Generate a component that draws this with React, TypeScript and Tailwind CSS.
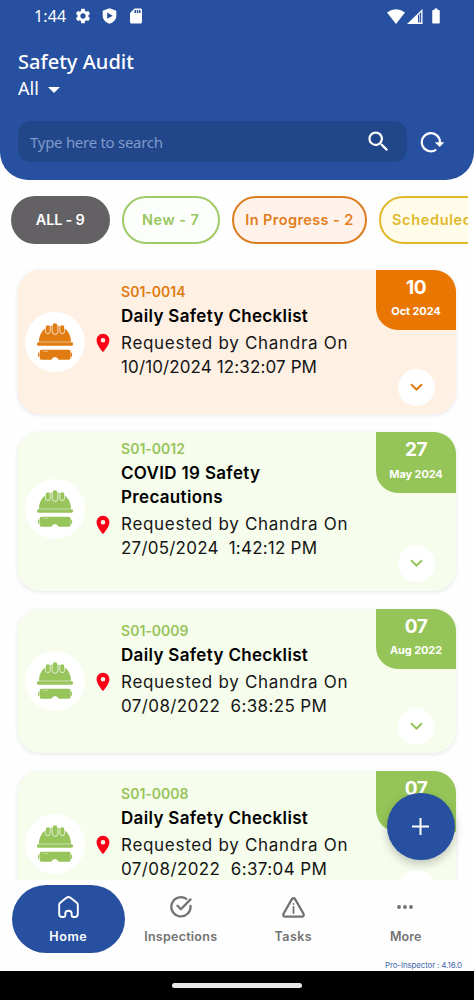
import type { ReactNode } from "react";
import { MdBatteryFull, MdLocationOn, MdSdCard, MdSearch, MdSettings } from "react-icons/md";

function ShieldPlay() {
  return (
    <svg className="h-4 w-[15px]" viewBox="0 0 15 16" fill="none">
      <path d="M7.5 0.3 14.3 2.7V7.8C14.3 11.6 11.2 14.6 7.5 15.8 3.8 14.6.7 11.6.7 7.8V2.7Z" fill="white" />
      <path d="M5.2 4.6v6.2L10.7 7.7Z" fill="#2751a0" />
    </svg>
  );
}

function Wifi() {
  return (
    <svg className="h-[15px] w-[18px]" viewBox="0 0 18 15">
      <path d="M0 3.6Q9-3.2 18 3.6L9 15Z" fill="white" />
    </svg>
  );
}

function Signal() {
  return (
    <svg className="h-[15px] w-[16px]" viewBox="0 0 16 15">
      <path d="M0 15 15.5 0V15Z" fill="white" />
      <path d="M11 6.2 14.2 3.1V13.6H11Z" fill="#2751a0" />
      <path d="M12.6 4.8V15" stroke="white" strokeWidth="0.7" />
    </svg>
  );
}

function Refresh() {
  return (
    <svg className="h-6 w-6" viewBox="0 0 24 24" fill="none">
      <path d="M16.2 19.6A9.1 9.1 0 1 1 20 12V14" stroke="white" strokeWidth="2.2" />
      <path d="M14.8 12.2H24.4L19.7 17Z" fill="white" />
    </svg>
  );
}

function Helmet() {
  return (
    <svg className="h-[37px] w-9" viewBox="0 0 108 111" fill="currentColor">
      <path d="M6 56C6 34 17 18 34 11Q54 2 74 11C91 18 102 34 102 56Z" />
      <path d="M47 32V8Q47 1 54 1t7 7V32Z" />
      <path d="M26 28V13Q27 7 33 7t6 6V28ZM69 28V13Q70 7 76 7t6 6V28Z" />
      <path
        d="M45.5 9V26Q46 34 54 34t8.5-8V9M25 13V25Q26 32 32.5 32t7-7V10M68.5 10V25Q69 32 75.5 32t7.5-7V13"
        fill="none"
        stroke="white"
        strokeWidth="2.2"
      />
      <rect x="0" y="58" width="108" height="10" rx="4" />
      <path d="M13 80H95Q101 80 101 86V104Q101 110 95 110H65Q61 102 54 102T43 110H13Q8 110 8 104V86Q8 80 13 80Z" />
      <path d="M5 89V101M103.5 89V101" stroke="currentColor" strokeWidth="3.5" />
      <path d="M18 85H34" stroke="white" strokeWidth="1.2" />
    </svg>
  );
}

function HomeIcon() {
  return (
    <svg className="h-[22px] w-[21px]" viewBox="0 0 21 22" fill="none" stroke="currentColor" strokeWidth="1.9" strokeLinejoin="round">
      <path d="M1.2 8.8Q1.2 7.6 2.2 6.8L8.8 1.6Q10.5.4 12.2 1.6L18.8 6.8Q19.8 7.6 19.8 8.8V17.9Q19.8 21 16.8 21H15.1Q13.7 21 13.7 19.6V17.7Q13.7 14.7 10.5 14.7T7.3 17.7V19.6Q7.3 21 5.9 21H4.2Q1.2 21 1.2 17.9Z" />
    </svg>
  );
}

function CheckIcon() {
  return (
    <svg className="h-[22px] w-[22px]" viewBox="0 0 22 22" fill="none" stroke="currentColor" strokeWidth="2.3" strokeLinecap="round" strokeLinejoin="round">
      <path d="M16.4 2.9A9.6 9.6 0 1 0 20.5 9.9" />
      <path d="M7.5 9.8 10.9 13.2 20.5 3.4" />
    </svg>
  );
}

function TasksIcon() {
  return (
    <svg className="h-[21px] w-[23px]" viewBox="0 0 23 21" fill="none" stroke="currentColor" strokeWidth="2.3" strokeLinecap="round" strokeLinejoin="round">
      <path d="M9.9 2.1Q11.5.4 13.1 2.1L21.5 16.8Q22.3 19.5 19.8 19.7H3.2Q.7 19.5 1.5 16.8Z" />
      <path d="M11.5 10V16" strokeWidth="1.8" />
      <path d="M11.5 7V7.1" strokeWidth="1.8" />
    </svg>
  );
}

function DotsIcon() {
  return (
    <svg className="mr-px mb-px h-1 w-4" viewBox="0 0 16 4" fill="currentColor">
      <circle cx="2" cy="2" r="1.9" />
      <circle cx="8" cy="2" r="1.9" />
      <circle cx="14" cy="2" r="1.9" />
    </svg>
  );
}

type Audit = {
  id: string;
  title: ReactNode;
  date: string;
  dateClass: string;
  day: string;
  month: string;
  text: string;
  card: string;
  badge: string;
};

const audits: Audit[] = [
  {
    id: "S01-0014",
    title: "Daily Safety Checklist",
    date: "10/10/2024 12:32:07 PM",
    dateClass: "tracking-[0.12px]",
    day: "10",
    month: "Oct 2024",
    text: "text-[#e07c12]",
    card: "h-[144.5px] bg-[#fef0e3] pt-2.5",
    badge: "bg-[#e97600]",
  },
  {
    id: "S01-0012",
    title: (
      <>
        COVID 19 Safety
        <br />
        Precautions
      </>
    ),
    date: "27/05/2024  1:42:12 PM",
    dateClass: "tracking-[0.22px]",
    day: "27",
    month: "May 2024",
    text: "text-[#98c45c]",
    card: "h-[158.5px] bg-[#f6fdec] pt-[5px]",
    badge: "bg-[#95c558]",
  },
  {
    id: "S01-0009",
    title: "Daily Safety Checklist",
    date: "07/08/2022  6:38:25 PM",
    dateClass: "tracking-[0.38px]",
    day: "07",
    month: "Aug 2022",
    text: "text-[#98c45c]",
    card: "h-[144.5px] bg-[#f6fdec] pt-2.5",
    badge: "bg-[#95c558]",
  },
  {
    id: "S01-0008",
    title: "Daily Safety Checklist",
    date: "07/08/2022  6:37:04 PM",
    dateClass: "tracking-[0.4px]",
    day: "07",
    month: "Aug 2022",
    text: "text-[#98c45c]",
    card: "h-[144.5px] bg-[#f6fdec] pt-[10.5px]",
    badge: "bg-[#95c558]",
  },
];

function AuditCard({ audit }: { audit: Audit }) {
  return (
    <article className={`relative flex w-[438px] shrink-0 rounded-[22px] shadow-[0_1px_4px_rgba(0,0,0,0.1)] ${audit.card}`}>
      <div className={`-mt-2.5 flex w-[73px] shrink-0 items-center pl-[6.5px] ${audit.text}`}>
        <div className="flex h-[60px] w-[60px] items-center justify-center rounded-full bg-white">
          <Helmet />
        </div>
      </div>
      <div className="ml-[30px] w-[250px] text-[17px] leading-6 text-[#151515]">
        <p className={`text-[14px] font-semibold tracking-[0.02px] ${audit.text}`}>{audit.id}</p>
        <h2 className="font-semibold tracking-[0.33px] text-black">{audit.title}</h2>
        <div className="-ml-[29px] mt-[3px] flex">
          <MdLocationOn className="mt-[1.5px] mr-[7px] h-[22px] w-[22px] shrink-0 text-[#fb0017]" />
          <div className="whitespace-pre">
            <p className="tracking-[0.7px]">Requested by Chandra On</p>
            <p className={audit.dateClass}>{audit.date}</p>
          </div>
        </div>
      </div>
      <div className={`absolute top-0 right-0 flex h-[60.5px] w-[80px] flex-col items-center rounded-tr-[22px] rounded-bl-[22px] font-bold text-white ${audit.badge}`}>
        <span className="mt-1.5 text-[19px] leading-6 tracking-[-0.5px]">{audit.day}</span>
        <span className="-mt-[0.5px] text-[11px] leading-6 tracking-[-0.1px]">{audit.month}</span>
      </div>
      <div className={`absolute right-[21px] bottom-[8.5px] flex h-[37px] w-[37px] items-center justify-center rounded-full bg-white ${audit.text}`}>
        <svg className="mb-px h-[8px] w-[13px]" viewBox="0 0 13 8" fill="none" stroke="currentColor" strokeWidth="2">
          <path d="M1 1.2 6.5 6.5 12 1.2" />
        </svg>
      </div>
    </article>
  );
}

function NavItem({ icon, label, labelClass, active }: { icon: ReactNode; label: string; labelClass: string; active?: boolean }) {
  return (
    <div className={`flex h-[68px] w-[112.5px] flex-col items-center rounded-[34px] ${active ? "bg-[#2751a0] text-white" : "text-[#737373]"}`}>
      <div className="mt-[10.5px] flex h-[23px] items-center">{icon}</div>
      <span className={`mt-[10px] text-[12.5px] leading-4 font-semibold ${labelClass}`}>{label}</span>
    </div>
  );
}

export default function App() {
  return (
    <div className="flex h-[1000px] w-[474px] flex-col overflow-hidden bg-[#fefefe] font-['Inter','Noto_Sans',sans-serif]">
      <header className="flex h-[180px] shrink-0 flex-col rounded-b-[28px] bg-[#2751a0] font-['Noto_Sans',sans-serif] text-white">
        <div className="flex h-8 items-center pr-[33px] pl-[34px]">
          <span className="w-[41px] text-[16px] leading-8 tracking-[0.1px]">1:44</span>
          <MdSettings className="h-[18px] w-[18px] -ml-[1.5px]" />
          <span className="ml-[10px]"><ShieldPlay /></span>
          <MdSdCard className="ml-[10px] h-[18px] w-[18px]" />
          <div className="ml-auto flex items-center">
            <Wifi />
            <span className="ml-[2px]"><Signal /></span>
            <MdBatteryFull className="ml-[3.5px] -mr-[3.5px] h-[18px] w-[18px]" />
          </div>
        </div>
        <h1 className="mt-[16px] pl-[18px] text-[20px] leading-7 font-medium tracking-[0.03px]">Safety Audit</h1>
        <div className="flex h-6 items-center pl-[18px]">
          <span className="text-[18px] leading-6">All</span>
          <svg className="mt-1 ml-[9px] h-1.5 w-3" viewBox="0 0 12 6">
            <path d="M0 0H12L6 6Z" fill="white" />
          </svg>
        </div>
        <div className="mt-[21px] flex items-center pl-[18px]">
          <div className="flex h-[41px] w-[389px] items-center justify-between rounded-[13px] bg-[#21468a] pr-[15px] pl-3">
            <span className="mt-0.5 text-[15px] tracking-[-0.28px] text-[#7f9acb]">Type here to search</span>
            <MdSearch className="h-[27px] w-[27px]" />
          </div>
          <span className="ml-[13px]"><Refresh /></span>
        </div>
      </header>

      <div className="mt-4 mr-1.5 ml-[11px] flex h-12 shrink-0 gap-3 overflow-hidden text-[14.5px] font-semibold">
        <div className="flex w-[98.5px] shrink-0 items-center justify-center rounded-full bg-[#646165] tracking-[-0.2px] text-white">ALL - 9</div>
        <div className="flex w-[98.5px] shrink-0 items-center justify-center rounded-full border-2 border-[#a0ca66] bg-[#fbfefa] tracking-[0.5px] text-[#98c660]">New - 7</div>
        <div className="flex w-[135px] shrink-0 items-center justify-center rounded-full border-2 border-[#dc7d20] bg-[#fff2ea] tracking-[0.4px] text-[#e27d20]">In Progress - 2</div>
        <div className="flex w-[140px] shrink-0 items-center rounded-full border-2 border-[#e0b82b] bg-[#fffdea] pl-[11px] tracking-[0.65px] whitespace-nowrap text-[#dfb829]">Scheduled</div>
      </div>

      <main className="flex h-[635.5px] shrink-0 flex-col gap-[18px] overflow-hidden pt-[25.5px] pl-[18px]">
        {audits.map((audit) => (
          <AuditCard key={audit.id} audit={audit} />
        ))}
      </main>

      <footer className="relative flex h-[91.5px] shrink-0 flex-col bg-[#fefefe]">
        <button className="absolute -top-[87px] right-[19.5px] flex h-[67.5px] w-[67.5px] items-center justify-center rounded-full bg-[#2751a0] shadow-[0_4px_10px_rgba(0,0,0,0.22)] [clip-path:inset(-20px_-20px_-19px_-20px)]">
          <svg className="h-[17px] w-[17px]" viewBox="0 0 17 17" stroke="white" strokeWidth="2">
            <path d="M8.5 0V17M0 8.5H17" />
          </svg>
        </button>
        <nav className="mt-[5.5px] flex pl-3">
          <NavItem icon={<HomeIcon />} label="Home" labelClass="tracking-[0.6px]" active />
          <NavItem icon={<CheckIcon />} label="Inspections" labelClass="tracking-[0.25px]" />
          <NavItem icon={<TasksIcon />} label="Tasks" labelClass="tracking-[0.4px]" />
          <NavItem icon={<DotsIcon />} label="More" labelClass="tracking-[0.05px]" />
        </nav>
        <p className="mt-[6px] pr-3 text-right text-[8px] leading-3 tracking-[-0.16px] text-[#4568ac]">Pro-Inspector : 4.16.0</p>
      </footer>
      <div className="flex grow justify-center bg-black pt-3">
        <div className="h-[5px] w-[130px] rounded-full bg-[#e9e7ea]" />
      </div>
    </div>
  );
}
